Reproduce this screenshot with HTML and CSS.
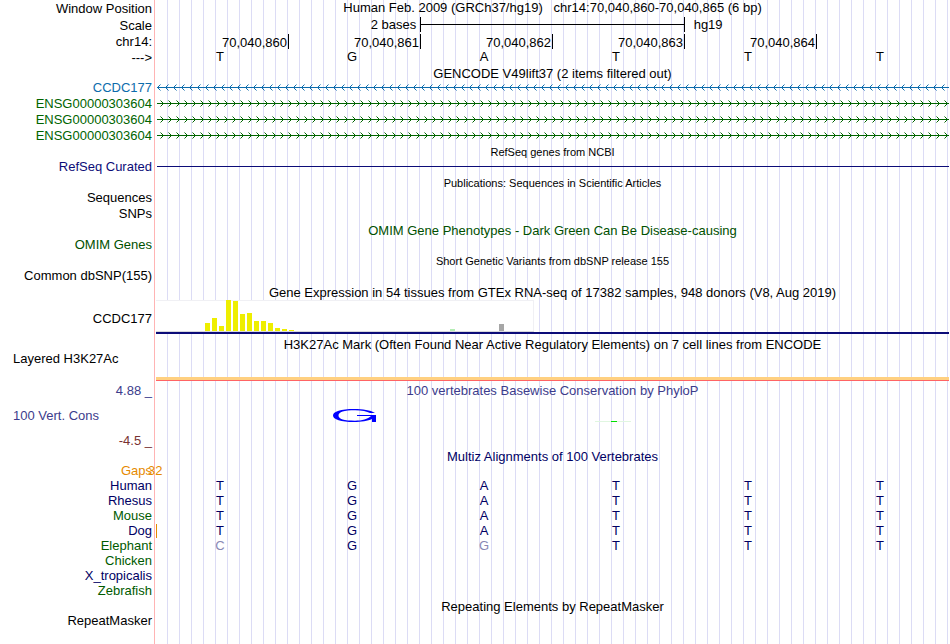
FILE: index.html
```
<!DOCTYPE html>
<html lang="en">
<head>
<meta charset="utf-8">
<title>Human chr14:70,040,860-70,040,865</title>
<link rel="stylesheet" href="styles.css">
</head>
<body>
<svg class="defs" aria-hidden="true">
  <defs>
    <pattern id="left" width="8" height="7" patternUnits="userSpaceOnUse">
      <path fill="#0c6cac" d="M0 3h8v1H0zM1 2h1v1H1zM1 4h1v1H1zM2 1h1v1H2zM2 5h1v1H2z"/>
      <path fill="#0c6cac" opacity=".5" d="M3 0h1v1H3zM3 6h1v1H3z"/>
    </pattern>
    <pattern id="right" width="8" height="7" patternUnits="userSpaceOnUse">
      <path fill="#006400" d="M0 3h8v1H0zM5 2h1v1H5zM5 4h1v1H5zM4 1h1v1H4zM4 5h1v1H4z"/>
      <path fill="#006400" opacity=".5" d="M3 0h1v1H3zM3 6h1v1H3z"/>
    </pattern>
  </defs>
</svg>
<main class="browser">
  <header>
    <div class="row head"><div class="label">Window Position</div><h1 class="track title">Human Feb. 2009 (GRCh37/hg19) &nbsp; chr14:70,040,860-70,040,865 (6 bp)</h1></div>
    <div class="row"><div class="label">Scale</div><div class="track thirds"><span class="bases">2 bases</span><span class="bar"></span><span class="assembly">hg19</span></div></div>
    <div class="row head"><div class="label">chr14:</div><div class="track ruler"><span>70,040,860</span><span>70,040,861</span><span>70,040,862</span><span>70,040,863</span><span>70,040,864</span></div></div>
    <div class="row short"><div class="label">---&gt;</div><div class="track letters"><span>T</span><span>G</span><span>A</span><span>T</span><span>T</span><span>T</span></div></div>
  </header>

  <div class="tracks">
    <div class="row short"><div class="label"></div><h2 class="track title">GENCODE V49lift37 (2 items filtered out)</h2></div>
    <div class="row"><div class="label blue">CCDC177</div><div class="track gene"><svg class="intron"><rect width="100%" height="7" fill="url(#left)"/></svg></div></div>
    <div class="row"><div class="label green">ENSG00000303604</div><div class="track gene"><svg class="intron"><rect width="100%" height="7" fill="url(#right)"/></svg></div></div>
    <div class="row"><div class="label green">ENSG00000303604</div><div class="track gene"><svg class="intron"><rect width="100%" height="7" fill="url(#right)"/></svg></div></div>
    <div class="row"><div class="label green">ENSG00000303604</div><div class="track gene"><svg class="intron"><rect width="100%" height="7" fill="url(#right)"/></svg></div></div>

    <div class="row short"><div class="label"></div><h2 class="track title small">RefSeq genes from NCBI</h2></div>
    <div class="row"><div class="label indigo">RefSeq Curated</div><div class="track gene"><span class="line"></span></div></div>
    <div class="row short"><div class="label"></div><h2 class="track title small">Publications: Sequences in Scientific Articles</h2></div>
    <div class="row"><div class="label">Sequences</div></div>
    <div class="row"><div class="label">SNPs</div></div>
    <div class="row short"><div class="label"></div><h2 class="track title omim">OMIM Gene Phenotypes - Dark Green Can Be Disease-causing</h2></div>
    <div class="row"><div class="label omim">OMIM Genes</div></div>
    <div class="row short"><div class="label"></div><h2 class="track title small">Short Genetic Variants from dbSNP release 155</h2></div>
    <div class="row"><div class="label">Common dbSNP(155)</div></div>

    <div class="row short"><div class="label"></div><h2 class="track title">Gene Expression in 54 tissues from GTEx RNA-seq of 17382 samples, 948 donors (V8, Aug 2019)</h2></div>
    <div class="row expression"><div class="label">CCDC177</div><div class="track gtex">
      <svg class="chart" viewBox="0 0 378 32" width="378" height="32" shape-rendering="crispEdges">
        <path fill="#fff" d="M0 0h378v32H0z"/>
        <path fill="#f0f0f4" d="M0 0h378v1H0zM377 0h1v31h-1z"/>
        <path fill="#d8d8dc" d="M0 31h378v1H0z"/>
        <path fill="#eeee00" d="M49 23h5v8h-5zM56 18h5v13h-5zM63 26h5v5h-5zM70 0h5v31h-5zM77 1h5v30h-5zM84 14h5v17h-5zM91 13h5v18h-5zM98 21h5v10h-5zM105 21h5v10h-5zM112 23h5v8h-5zM119 28h5v3h-5zM126 29h5v2h-5zM133 30h5v1h-5z"/>
        <path fill="#b4eeb4" d="M294 29h5v2h-5z"/><path fill="#a6a6a6" d="M343 24h5v7h-5z"/>
      </svg><span class="model"></span></div></div>

    <div class="row short"><div class="label"></div><h2 class="track title">H3K27Ac Mark (Often Found Near Active Regulatory Elements) on 7 cell lines from ENCODE</h2></div>
    <div class="row mark"><div class="label start">Layered H3K27Ac</div><div class="track signal"><span class="band"></span></div></div>

    <div class="row conservation">
      <div class="label scale"><span class="positive">4.88 _</span><span class="name">100 Vert. Cons</span><span class="negative">-4.5 _</span></div>
      <div class="track logo"><h2 class="title positive">100 vertebrates Basewise Conservation by PhyloP</h2>
        <svg class="plot" viewBox="0 0 792 20" width="792" height="20">
          <path fill="#00f" d="M221 5C216 2 209 1 200 1C187 1 179 3.500 179 7.500C179 11.500 187 14 200 14C207 14 214 13 218 11V14h4V7H203v1h14C214 11 208 12.700 201 12.700C190 12.700 184.500 11 184.500 7.500C184.500 4 190 2.300 201 2.300C208 2.300 213 3.500 216 5z"/>
          <path fill="#e0f6e0" d="M441 13h36v1h-36z"/><path fill="#00e000" d="M457 13h6v1h-6z"/>
        </svg></div>
    </div>
  </div>

  <div class="alignments">
    <div class="row short"><div class="label"></div><h2 class="track title navy">Multiz Alignments of 100 Vertebrates</h2></div>
    <div class="row short"><div class="label orange">Gaps</div><div class="track"><span class="gap-count">32</span></div></div>
    <div class="row short"><div class="label navy">Human</div><div class="track letters navy"><span>T</span><span>G</span><span>A</span><span>T</span><span>T</span><span>T</span></div></div>
    <div class="row short"><div class="label navy">Rhesus</div><div class="track letters navy"><span>T</span><span>G</span><span>A</span><span>T</span><span>T</span><span>T</span></div></div>
    <div class="row short"><div class="label species">Mouse</div><div class="track letters navy"><span>T</span><span>G</span><span>A</span><span>T</span><span>T</span><span>T</span></div></div>
    <div class="row short"><div class="label navy">Dog</div><div class="track letters navy insert"><span>T</span><span>G</span><span>A</span><span>T</span><span>T</span><span>T</span></div></div>
    <div class="row short"><div class="label species">Elephant</div><div class="track letters navy"><span class="differs">C</span><span>G</span><span class="differs">G</span><span>T</span><span>T</span><span>T</span></div></div>
    <div class="row short"><div class="label species">Chicken</div></div>
    <div class="row short"><div class="label navy">X_tropicalis</div></div>
    <div class="row short"><div class="label species">Zebrafish</div></div>
    <div class="row short"><div class="label"></div><h2 class="track title">Repeating Elements by RepeatMasker</h2></div>
    <div class="row short"><div class="label">RepeatMasker</div></div>
  </div>
</main>
</body>
</html>
```
FILE: styles.css
```
body {
  margin: 0;
  background: #fff;
  color: #000;
  font: 13px/15px "Liberation Sans", Arial, sans-serif;
}
.defs { position: absolute; width: 0; height: 0; }
.browser {
  box-sizing: border-box;
  min-height: 100vh;
  margin-right: 1px;
  background:
    linear-gradient(#ffb4b4, #ffb4b4) 154px 0 / 1px 100% no-repeat,
    linear-gradient(90deg, #fff 166px, transparent 166px),
    repeating-linear-gradient(90deg, transparent 0 11px, #dcdcf5 11px 12px);
}
.row {
  display: grid;
  grid-template-columns: 154px minmax(0, 1fr);
  min-height: 16px;
}
.short { min-height: 15px; }
.head { min-height: 17px; }
.label {
  align-self: center;
  padding-right: 2px;
  text-align: right;
  white-space: nowrap;
}
.tracks .label { align-self: start; }
.alignments .label,
.alignments .track { line-height: 13px; }
.alignments .label { align-self: start; }
.start { text-align: left; padding-left: 13px; }
.title {
  margin: 0;
  padding-left: 2px;
  font: inherit;
  text-align: center;
  white-space: nowrap;
}
.tracks .track.title {
  height: 13px;
  line-height: 17px;
}
.alignments .track.title { line-height: 15px; }
.small { font-size: 11px; }

.thirds {
  display: grid;
  grid-template-columns: 2fr 2fr 2fr;
  padding-left: 2px;
}
.bases { text-align: right; padding-right: 4px; }
.bar {
  height: 15px;
  border: solid #000;
  border-width: 0 1px;
  background: linear-gradient(#000, #000) 0 7px / 100% 1px no-repeat;
}
.assembly { padding-left: 9px; }
.ruler {
  display: grid;
  grid-template-columns: repeat(6, 1fr);
  padding: 1px 0 0 3px;
}
.ruler span {
  height: 15px;
  line-height: 17px;
  padding-right: 1px;
  border-right: 1px solid #000;
  text-align: right;
}
.letters {
  display: grid;
  grid-template-columns: repeat(6, 1fr);
  padding-right: 3px;
  text-align: center;
}
header .letters { line-height: 14px; }
.differs { color: #8888b4; }

.gene { padding-left: 3px; }
.intron { display: block; width: 100%; height: 7px; margin-top: 4px; }
.line { display: block; height: 1px; margin-top: 7px; background: #0c0c78; }

.expression { min-height: 37px; }
.tracks .expression .label { align-self: center; padding-top: 2px; }
.gtex { padding: 1px 0 0 2px; }
.chart { display: block; }
.model { display: block; height: 2px; background: #0c0c78; }
.mark { min-height: 32px; }
.signal { display: flex; align-items: end; padding: 0 0 2px 2px; }
.band { flex: 1; height: 3px; background: #ffd080; border-bottom: 1px solid #ff6464; }

.conservation { min-height: 66px; }
.scale { display: flex; flex-direction: column; gap: 10px; }
.name { padding-left: 13px; text-align: left; color: #3c3c8c; }
.positive { color: #3c3c8c; }
.negative { color: #783232; }
.plot { display: block; margin-top: 10px; }

.insert { background: linear-gradient(#e68a00, #e68a00) 2px 0 / 1px 14px no-repeat; }
.gap-count { margin-left: -6px; color: #e68a00; }
.orange { color: #e68a00; }
.blue { color: #0c6cac; }
.green { color: #006400; }
.indigo { color: #0c0c78; }
.omim { color: #005000; }
.navy { color: #000064; }
.species { color: #005a00; }
```
